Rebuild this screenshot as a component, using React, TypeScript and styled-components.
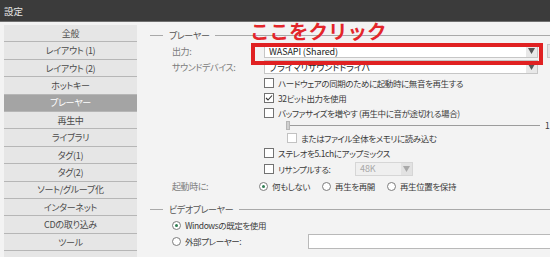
import styled, { createGlobalStyle } from "styled-components"

const GlobalStyle = createGlobalStyle`
  html, body {
    margin: 0;
    padding: 0;
  }
  body {
    width: 550px;
    height: 257px;
    overflow: hidden;
    background: #f3f3f3;
    font-family: "Noto Sans CJK JP", "Noto Sans", sans-serif;
    font-feature-settings: "palt";
    font-size: 8.5px;
    letter-spacing: -0.4px;
    color: #3a3a3a;
  }
`

const Window = styled.div`
  width: 550px;
  height: 257px;
  display: flex;
  flex-direction: column;
  overflow: hidden;
  position: relative;
`

const TitleBar = styled.div`
  height: 21px;
  flex: none;
  background: #3b3b3b;
  border-bottom: 1px solid #707070;
  color: #e4e4e4;
  display: flex;
  align-items: center;
  padding-left: 4px;
  font-size: 9.5px;
  letter-spacing: 0;
`

const Body = styled.div`
  flex: 1;
  display: flex;
  min-height: 0;
`

const Sidebar = styled.div`
  width: 133px;
  flex: none;
  margin: 3px 0 0 4px;
  display: flex;
  flex-direction: column;
`

const NavItem = styled.div<{ $active?: boolean }>`
  height: 17.42px;
  flex: none;
  box-sizing: border-box;
  border-bottom: 1px solid #b6b6b6;
  background: ${p => (p.$active ? "#a4a4a4" : "#e6e6e6")};
  color: ${p => (p.$active ? "#ffffff" : "#4a4a4a")};
  display: flex;
  align-items: center;
  justify-content: center;
  font-size: 9px;
  letter-spacing: -0.3px;
`

const Content = styled.div`
  flex: 1;
  min-width: 0;
  padding: 5px 0 0 13px;
  display: flex;
  flex-direction: column;
  overflow: hidden;
`

const GroupHeader = styled.div<{ $top?: number }>`
  height: 16px;
  flex: none;
  margin-top: ${p => p.$top ?? 0}px;
  display: flex;
  align-items: center;
  gap: 6px;
  color: #555;
  font-size: 9px;

  &::before {
    content: "";
    width: 13px;
    border-top: 1px solid #a9a9a9;
  }
  &::after {
    content: "";
    flex: 1;
    border-top: 1px solid #a9a9a9;
  }
`

const GroupBody = styled.div`
  display: flex;
  flex-direction: column;
  padding-left: 22px;
`

const Row = styled.div<{ $h: number; $indent?: number }>`
  height: ${p => p.$h}px;
  flex: none;
  display: flex;
  align-items: center;
  padding-left: ${p => p.$indent ?? 0}px;
  white-space: nowrap;
`

const FieldLabel = styled.div<{ $w?: number }>`
  width: ${p => p.$w ?? 92}px;
  flex: none;
  color: #7c7c7c;
  font-size: 9px;
`

const Select = styled.div<{ $w: number; $disabled?: boolean }>`
  width: ${p => p.$w}px;
  height: 14px;
  flex: none;
  box-sizing: border-box;
  border: 1px solid ${p => (p.$disabled ? "#d6d6d6" : "#c6c6c6")};
  background: ${p => (p.$disabled ? "#efefef" : "#ffffff")};
  color: ${p => (p.$disabled ? "#a8a8a8" : "#222")};
  display: flex;
  align-items: center;
  padding-left: 4px;
  font-size: 9px;
  letter-spacing: -0.1px;
`

const SelectArrow = styled.span<{ $disabled?: boolean }>`
  margin-left: auto;
  width: 11px;
  height: 12px;
  display: flex;
  align-items: center;
  justify-content: center;
  background: ${p => (p.$disabled ? "#e2e2e2" : "#e8e8e8")};
  color: ${p => (p.$disabled ? "#a9a9a9" : "#555")};
`

const SideButton = styled.div`
  width: 20px;
  height: 14px;
  flex: none;
  margin-left: 9px;
  box-sizing: border-box;
  background: #e4e4e4;
  border: 1px solid #c8c8c8;
`

const CheckLabel = styled.label<{ $w?: number }>`
  display: flex;
  align-items: center;
  gap: 4px;
  width: ${p => (p.$w ? `${p.$w}px` : "auto")};
  flex: none;
`

const Box = styled.span<{ $disabled?: boolean }>`
  width: 10px;
  height: 10px;
  flex: none;
  box-sizing: border-box;
  border: 1px solid ${p => (p.$disabled ? "#c2c2c2" : "#727272")};
  background: #fff;
  display: flex;
  align-items: center;
  justify-content: center;
`

const RadioGroup = styled.div`
  display: flex;
  align-items: center;
  gap: 12px;
`

const RadioLabel = styled.label<{ $w?: number }>`
  display: flex;
  align-items: center;
  gap: 4px;
  width: ${p => (p.$w ? `${p.$w}px` : "auto")};
  flex: none;
`

const Circle = styled.span<{ $on?: boolean }>`
  width: 9px;
  height: 9px;
  flex: none;
  box-sizing: border-box;
  border-radius: 50%;
  border: 1px solid #7d7d7d;
  background: #fff;
  display: flex;
  align-items: center;
  justify-content: center;

  &::after {
    content: "";
    width: 3px;
    height: 3px;
    border-radius: 50%;
    background: ${p => (p.$on ? "#2f7d52" : "transparent")};
  }
`

const Slider = styled.div`
  width: 254px;
  height: 10px;
  flex: none;
  display: flex;
  align-items: center;

  &::after {
    content: "";
    flex: 1;
    border-top: 1px solid #9c9c9c;
  }
`

const Thumb = styled.span`
  width: 4px;
  height: 9px;
  flex: none;
  box-sizing: border-box;
  background: #cfcfcf;
  border: 1px solid #b5b5b5;
`

const SliderValue = styled.span`
  margin-left: 5px;
`

const TextInput = styled.div`
  width: 260px;
  height: 15px;
  flex: none;
  box-sizing: border-box;
  background: #fff;
  border: 1px solid #b9b9b9;
`

const Callout = styled.div`
  position: absolute;
  left: 250px;
  top: 21px;
  font-size: 19.5px;
  line-height: 20px;
  font-weight: bold;
  letter-spacing: 0;
  font-feature-settings: normal;
  color: #e3262b;
  white-space: nowrap;
`

const CalloutBox = styled.div`
  position: absolute;
  left: 251px;
  top: 43px;
  width: 292px;
  height: 22px;
  box-sizing: border-box;
  border: 4px solid #e02122;
`

const Arrow = ({ disabled }: { disabled?: boolean }) => (
  <SelectArrow $disabled={disabled}>
    <svg width="7" height="6" viewBox="0 0 7 6">
      <path d="M0 0 H7 L3.5 6 Z" fill="currentColor" />
    </svg>
  </SelectArrow>
)

const CheckBox = ({ checked, disabled, w, children }: { checked?: boolean; disabled?: boolean; w?: number; children: React.ReactNode }) => (
  <CheckLabel $w={w}>
    <Box $disabled={disabled}>
      {checked && (
        <svg width="8" height="8" viewBox="0 0 8 8">
          <path d="M1 4 L3 6 L7 1.5" fill="none" stroke="#333" strokeWidth="1.1" />
        </svg>
      )}
    </Box>
    {children}
  </CheckLabel>
)

const Radio = ({ on, w, children }: { on?: boolean; w?: number; children: React.ReactNode }) => (
  <RadioLabel $w={w}>
    <Circle $on={on} />
    {children}
  </RadioLabel>
)

const navItems = [
  "全般",
  "レイアウト (1)",
  "レイアウト (2)",
  "ホットキー",
  "プレーヤー",
  "再生中",
  "ライブラリ",
  "タグ(1)",
  "タグ(2)",
  "ソート/グループ化",
  "インターネット",
  "CDの取り込み",
  "ツール",
  "",
]

export default function App() {
  return (
    <>
      <GlobalStyle />
      <Window>
        <TitleBar>設定</TitleBar>
        <Body>
          <Sidebar>
            {navItems.map((name, i) => (
              <NavItem key={i} $active={name === "プレーヤー"}>
                {name}
              </NavItem>
            ))}
          </Sidebar>

          <Content>
            <GroupHeader>プレーヤー</GroupHeader>
            <GroupBody>
              <Row $h={16}>
                <FieldLabel>出力:</FieldLabel>
                <Select $w={274}>
                  WASAPI (Shared)
                  <Arrow />
                </Select>
                <SideButton />
              </Row>
              <Row $h={16}>
                <FieldLabel>サウンドデバイス:</FieldLabel>
                <Select $w={274}>
                  プライマリサウンドドライバ
                  <Arrow />
                </Select>
              </Row>
              <Row $h={15} $indent={92}>
                <CheckBox>ハードウェアの同期のために起動時に無音を再生する</CheckBox>
              </Row>
              <Row $h={15} $indent={92}>
                <CheckBox checked>32ビット出力を使用</CheckBox>
              </Row>
              <Row $h={15} $indent={92}>
                <CheckBox>バッファサイズを増やす (再生中に音が途切れる場合)</CheckBox>
              </Row>
              <Row $h={10} $indent={114}>
                <Slider>
                  <Thumb />
                </Slider>
                <SliderValue>1</SliderValue>
              </Row>
              <Row $h={15} $indent={115}>
                <CheckBox disabled>またはファイル全体をメモリに読み込む</CheckBox>
              </Row>
              <Row $h={15} $indent={92}>
                <CheckBox>ステレオを5.1chにアップミックス</CheckBox>
              </Row>
              <Row $h={17} $indent={92}>
                <CheckBox w={91}>リサンプルする:</CheckBox>
                <Select $w={58} $disabled>
                  48K
                  <Arrow disabled />
                </Select>
              </Row>
              <Row $h={18}>
                <FieldLabel $w={87}>起動時に:</FieldLabel>
                <RadioGroup>
                  <Radio on>何もしない</Radio>
                  <Radio>再生を再開</Radio>
                  <Radio>再生位置を保持</Radio>
                </RadioGroup>
              </Row>
            </GroupBody>

            <GroupHeader $top={6}>ビデオプレーヤー</GroupHeader>
            <GroupBody>
              <Row $h={16}>
                <Radio on>Windowsの既定を使用</Radio>
              </Row>
              <Row $h={16}>
                <Radio w={136}>外部プレーヤー:</Radio>
                <TextInput />
              </Row>
            </GroupBody>
          </Content>
        </Body>

        <Callout>ここをクリック</Callout>
        <CalloutBox />
      </Window>
    </>
  )
}
